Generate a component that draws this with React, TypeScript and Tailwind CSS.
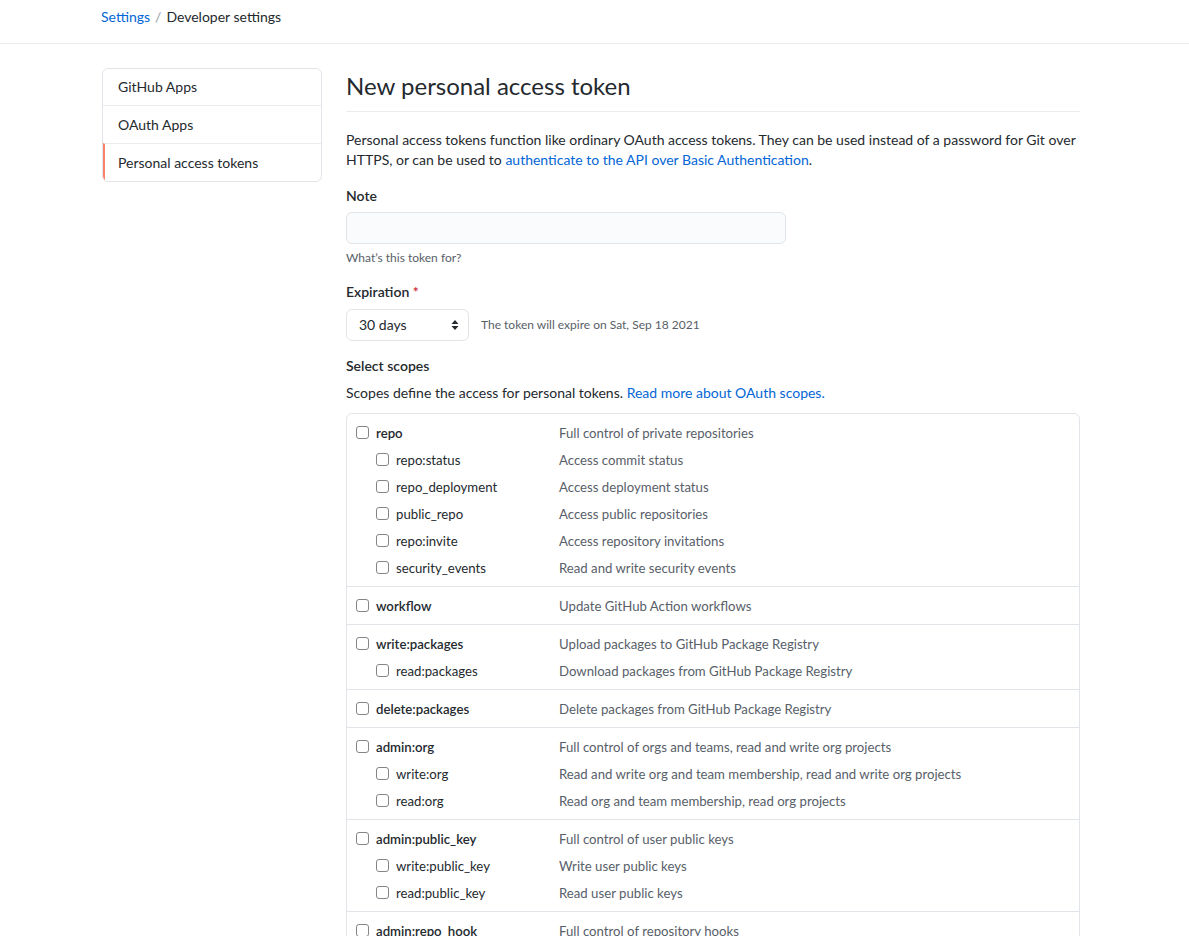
import React from 'react';

type Scope = { name: string; desc: string; children?: { name: string; desc: string }[] };

const scopes: Scope[] = [
  {
    name: 'repo',
    desc: 'Full control of private repositories',
    children: [
      { name: 'repo:status', desc: 'Access commit status' },
      { name: 'repo_deployment', desc: 'Access deployment status' },
      { name: 'public_repo', desc: 'Access public repositories' },
      { name: 'repo:invite', desc: 'Access repository invitations' },
      { name: 'security_events', desc: 'Read and write security events' },
    ],
  },
  { name: 'workflow', desc: 'Update GitHub Action workflows' },
  {
    name: 'write:packages',
    desc: 'Upload packages to GitHub Package Registry',
    children: [{ name: 'read:packages', desc: 'Download packages from GitHub Package Registry' }],
  },
  { name: 'delete:packages', desc: 'Delete packages from GitHub Package Registry' },
  {
    name: 'admin:org',
    desc: 'Full control of orgs and teams, read and write org projects',
    children: [
      { name: 'write:org', desc: 'Read and write org and team membership, read and write org projects' },
      { name: 'read:org', desc: 'Read org and team membership, read org projects' },
    ],
  },
  {
    name: 'admin:public_key',
    desc: 'Full control of user public keys',
    children: [
      { name: 'write:public_key', desc: 'Write user public keys' },
      { name: 'read:public_key', desc: 'Read user public keys' },
    ],
  },
  {
    name: 'admin:repo_hook',
    desc: 'Full control of repository hooks',
    children: [
      { name: 'write:repo_hook', desc: 'Write repository hooks' },
      { name: 'read:repo_hook', desc: 'Read repository hooks' },
    ],
  },
  { name: 'admin:org_hook', desc: 'Full control of organization hooks' },
  { name: 'gist', desc: 'Create gists' },
];

const Checkbox = () => (
  <span className="inline-block w-[13px] h-[13px] shrink-0 rounded-[3px] border border-[#858585] bg-white" />
);

const ScopeRow: React.FC<{ name: string; desc: string; child?: boolean }> = ({ name, desc, child }) => (
  <div className="flex items-center h-[27px] text-[13.2px]">
    <div className={`flex items-center gap-[7px] w-[203px] shrink-0 ${child ? 'pl-5' : ''}`}>
      <Checkbox />
      <span className={child ? 'text-[#24292e]' : 'font-semibold text-[#24292e]'}>{name}</span>
    </div>
    <span className="text-[#586069]">{desc}</span>
  </div>
);

const navClass = [
  'h-[36px] pl-[15px]',
  'h-[38px] pl-[15px] border-t border-[#eaecef]',
  'h-[38px] pl-[13px] border-t border-t-[#eaecef] border-l-2 border-l-[#f9826c]',
];

export default function App() {
  const nav = ['GitHub Apps', 'OAuth Apps', 'Personal access tokens'];

  return (
    <div
      className="min-h-screen bg-white text-[14px] leading-5 text-[#24292e]"
      style={{ fontFamily: '"Segoe UI", Lato, "Liberation Sans", sans-serif' }}
    >
      <div className="h-[44px] border-b border-[#eaecef] flex items-center pl-[101px] pb-[10px]">
        <a className="text-[#0366d6]">Settings</a>
        <span className="mx-[5px] text-[#959da5]">/</span>
        <span className="text-[#24292e]">Developer settings</span>
      </div>

      <div className="flex ml-[102px] w-[978px] gap-6 pt-6">
        <nav className="w-[220px] shrink-0 self-start border border-[#e1e4e8] rounded-md overflow-hidden">
          {nav.map((item, i) => (
            <div key={item} className={`flex items-center text-[#24292e] ${navClass[i]}`}>
              {item}
            </div>
          ))}
        </nav>

        <main className="w-[734px]">
          <h1 className="text-[24px] leading-9 font-normal border-b border-[#eaecef] pb-[7px]">
            New personal access token
          </h1>
          <p className="mt-[18px]">
            Personal access tokens function like ordinary OAuth access tokens. They can be used instead of a password for Git over
            HTTPS, or can be used to{' '}
            <a className="text-[#0366d6]">authenticate to the API over Basic Authentication</a>.
          </p>

          <div className="mt-4 font-semibold">Note</div>
          <div className="mt-[6px] w-[440px] h-[32px] rounded-md border border-[#e1e4e8] bg-[#fafbfc]" />
          <div className="mt-[5px] text-[12px] leading-[18px] text-[#586069]">What’s this token for?</div>

          <div className="mt-[15px] font-semibold">
            Expiration <span className="text-[#cb2431]">*</span>
          </div>
          <div className="mt-[7px] flex items-center gap-3">
            <div className="w-[123px] h-[32px] rounded-md border border-[#e1e4e8] bg-white flex items-center justify-between pl-3 pr-[9px]">
              <span>30 days</span>
              <svg width="8" height="12" viewBox="0 0 8 12" fill="#24292e">
                <path d="M4 1 L7.5 5 H0.5 Z" />
                <path d="M4 11 L7.5 7 H0.5 Z" />
              </svg>
            </div>
            <span className="text-[12px] text-[#586069]">The token will expire on Sat, Sep 18 2021</span>
          </div>

          <div className="mt-[15px] font-semibold">Select scopes</div>
          <p className="mt-[7px]">
            Scopes define the access for personal tokens.{' '}
            <a className="text-[#0366d6]">Read more about OAuth scopes.</a>
          </p>

          <div className="mt-[10px] border border-[#e1e4e8] rounded-md">
            {scopes.map((s, i) => (
              <div key={s.name} className={`py-[5px] pl-[9px] ${i > 0 ? 'border-t border-[#e1e4e8]' : ''}`}>
                <ScopeRow name={s.name} desc={s.desc} />
                {s.children?.map((c) => (
                  <ScopeRow key={c.name} name={c.name} desc={c.desc} child />
                ))}
              </div>
            ))}
          </div>
        </main>
      </div>
    </div>
  );
}
